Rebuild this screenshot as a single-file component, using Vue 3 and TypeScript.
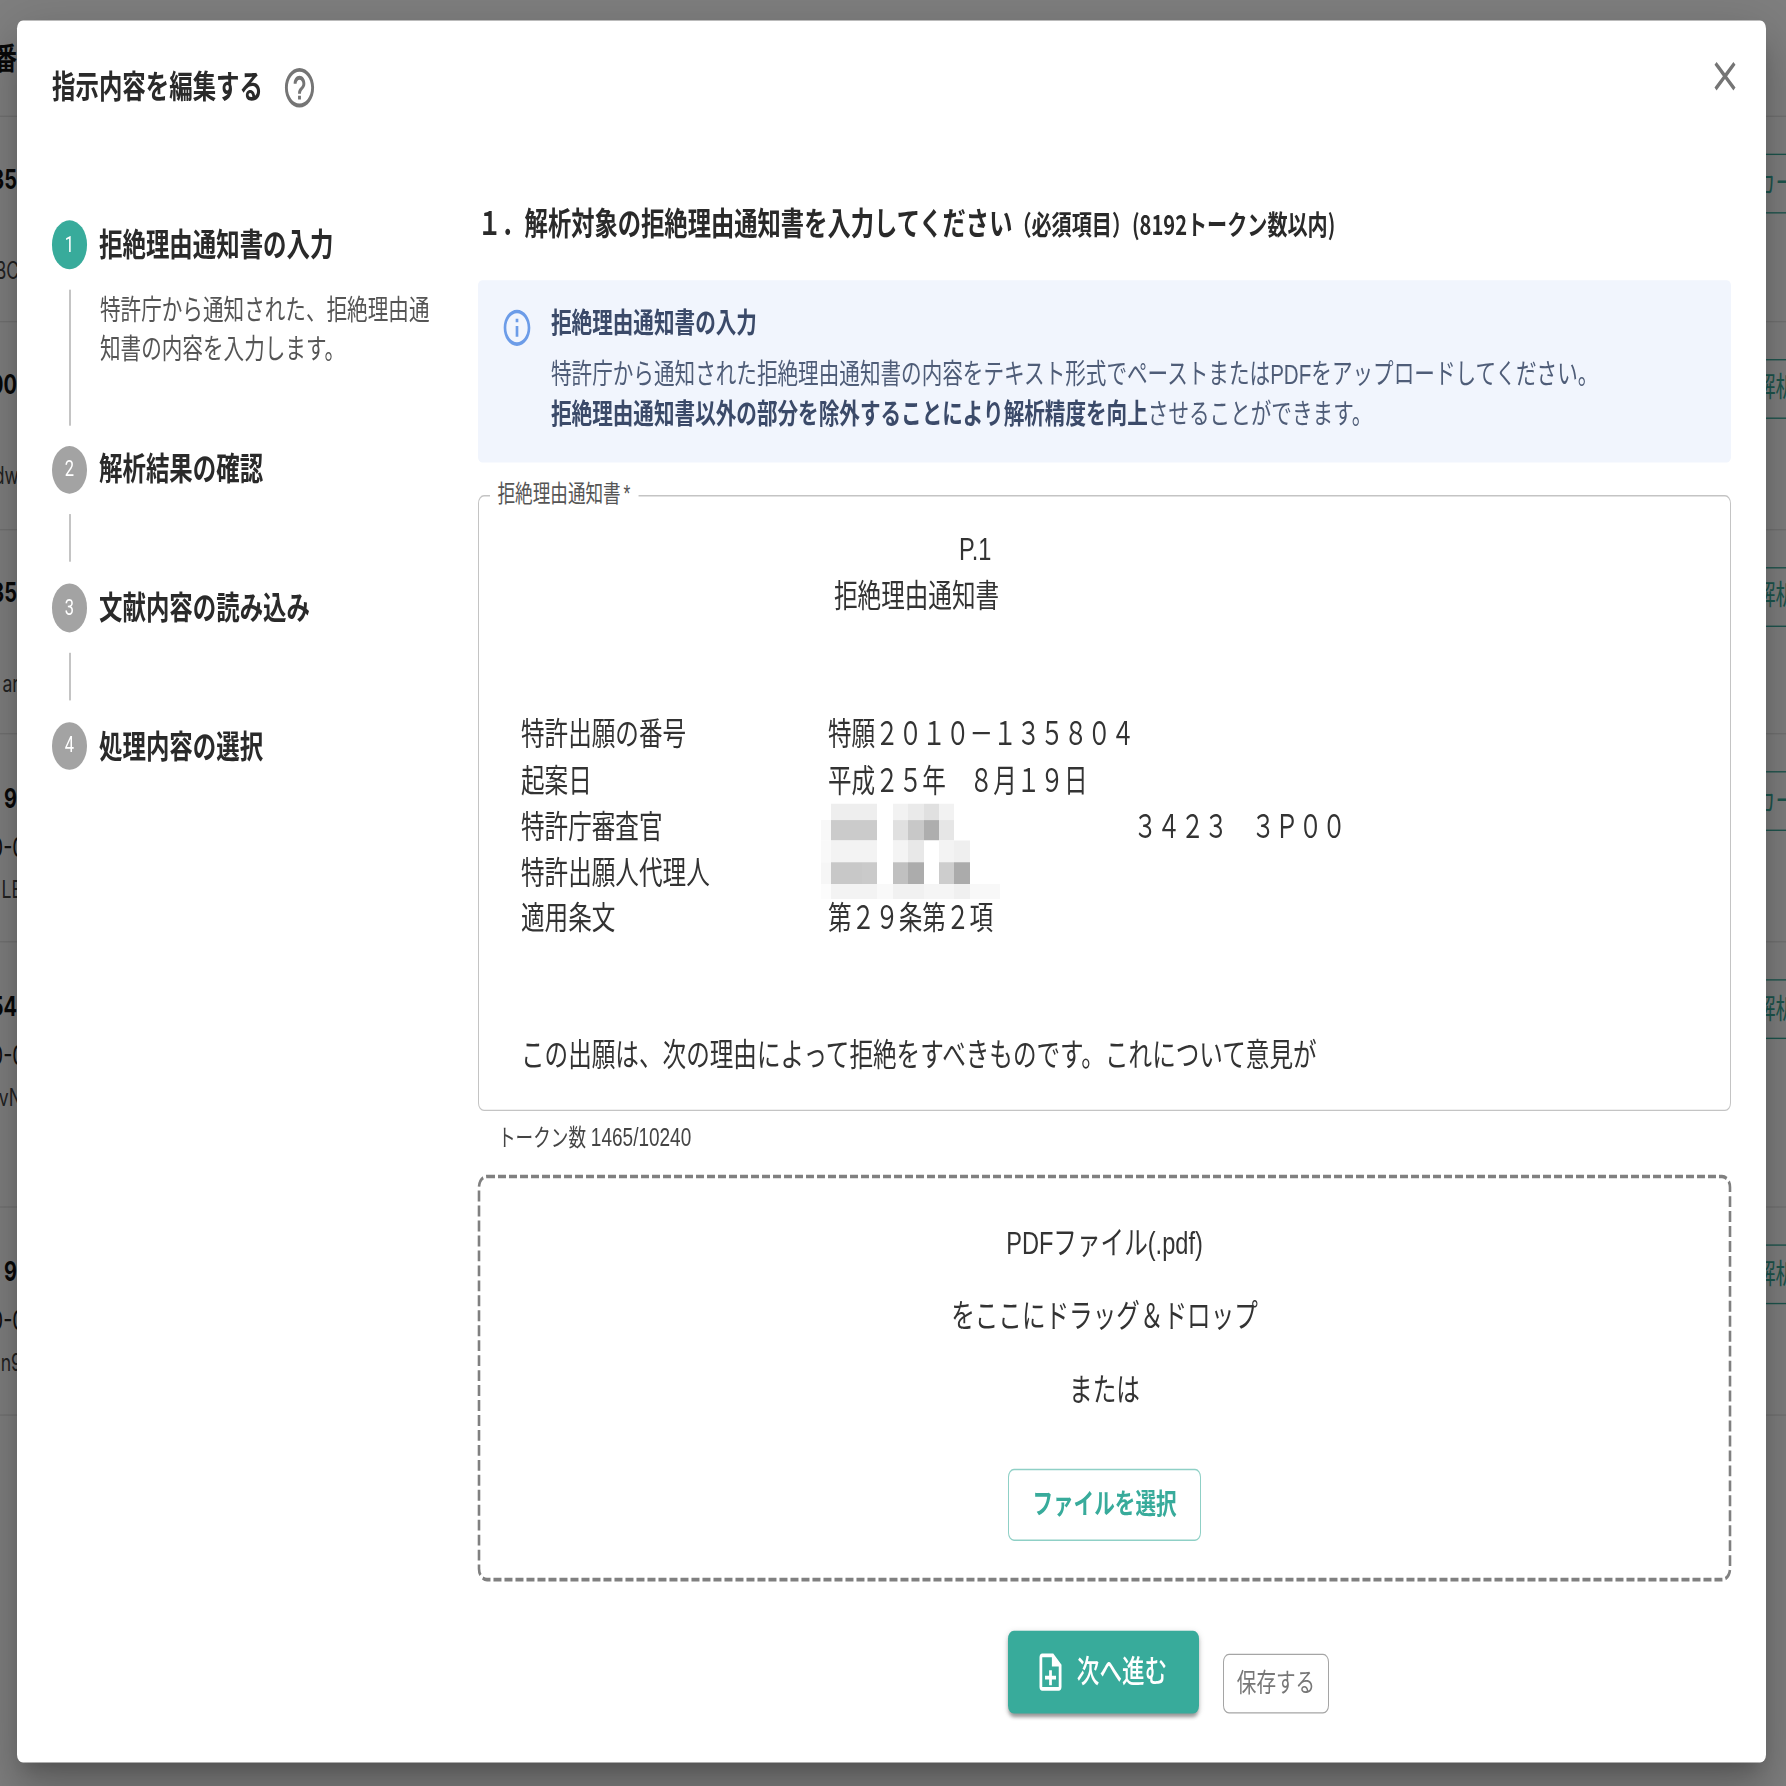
<script setup lang="ts">
interface Row { h: number; kind: string; left: string[]; right: string }
const rows: Row[] = [
  { h: 86, kind: 'head', left: ['番'], right: '' },
  { h: 150.7, kind: 'two', left: ['35', 'BC'], right: 'カー' },
  { h: 153, kind: 'two', left: ['00', 'dw'], right: '解析' },
  { h: 150.7, kind: 'two', left: ['35', 'ar'], right: '解析' },
  { h: 153, kind: 'three', left: ['9', '10-0', 'LE'], right: 'カー' },
  { h: 195, kind: 'three', left: ['54', '10-0', 'xvN'], right: '解析' },
  { h: 153, kind: 'three', left: ['9', '10-0', 'n9'], right: '解析' },
]
const steps = [
  { n: 1, title: '拒絶理由通知書の入力', active: true, desc: '特許庁から通知された、拒絶理由通知書の内容を入力します。' },
  { n: 2, title: '解析結果の確認', active: false, desc: '' },
  { n: 3, title: '文献内容の読み込み', active: false, desc: '' },
  { n: 4, title: '処理内容の選択', active: false, desc: '' },
]
const docRows = [
  { label: '特許出願の番号', value: '特願２０１０－１３５８０４', extra: '' },
  { label: '起案日', value: '平成２５年　８月１９日', extra: '' },
  { label: '特許庁審査官', value: '', extra: '３４２３　３Ｐ００' },
  { label: '特許出願人代理人', value: '', extra: '' },
  { label: '適用条文', value: '第２９条第２項', extra: '' },
]
const w = '#ffffff'
const mosaic: string[][] = [
  [w, '#eeeeee', '#eeeeee', '#eeeeee', w, '#f2f2f2', '#eaeaea', '#e0e0e0', '#f2f2f2', w, w, w],
  ['#f8f8f8', '#cbcbcb', '#cbcbcb', '#cbcbcb', w, '#e0e0e0', '#c8c8c8', '#aeaeae', '#e6e6e6', w, w, w],
  ['#f9f9f9', '#f3f3f3', '#f3f3f3', '#f3f3f3', w, '#f4f4f4', '#e8e8e8', w, '#f3f3f3', '#efefef', w, w],
  ['#f6f6f6', '#c8c8c8', '#c8c8c8', '#cacaca', w, '#c0c0c0', '#acacac', w, '#cdcdcd', '#ababab', w, w],
  ['#fcfcfc', '#f3f3f3', '#f3f3f3', '#f3f3f3', '#f9f9f9', '#f1f1f1', '#f1f1f1', '#f5f5f5', '#f5f5f5', '#f0f0f0', '#f8f8f8', '#f8f8f8'],
]
</script>

<template>
  <div class="stage">
    <div class="page">
      <div class="table">
        <div v-for="(r, i) in rows" :key="i" class="row" :class="r.kind" :style="{ height: r.h + 'px' }">
          <div class="left-cell">
            <div v-for="(t, j) in r.left" :key="j" class="left-line" :class="'l' + j">{{ t }}</div>
          </div>
          <div class="right-cell">
            <div v-if="r.right" class="row-btn"><span>{{ r.right }}</span></div>
          </div>
        </div>
      </div>
      <div class="scrim"></div>

      <section class="modal">
        <header class="modal-head">
          <h2 class="modal-title">指示内容を編集する</h2>
          <svg class="help" viewBox="0 0 24 24"><path d="M11 18h2v-2h-2v2zm1-16C6.48 2 2 6.48 2 12s4.48 10 10 10 10-4.48 10-10S17.52 2 12 2zm0 18c-4.41 0-8-3.59-8-8s3.59-8 8-8 8 3.59 8 8-3.59 8-8 8zm0-14c-2.21 0-4 1.79-4 4h2c0-1.1.9-2 2-2s2 .9 2 2c0 2-3 1.75-3 5h2c0-2.25 3-2.5 3-5 0-2.21-1.79-4-4-4z" /></svg>
        </header>
        <svg class="close" viewBox="0 0 24 24"><path d="M19 6.41 17.59 5 12 10.59 6.41 5 5 6.41 10.59 12 5 17.59 6.41 19 12 13.41 17.59 19 19 17.59 13.41 12z" /></svg>

        <div class="modal-body">
          <nav class="stepper">
            <template v-for="(s, i) in steps" :key="s.n">
              <div class="step-head">
                <span class="step-num" :class="{ active: s.active }">{{ s.n }}</span>
                <span class="step-title">{{ s.title }}</span>
              </div>
              <div v-if="i < steps.length - 1" class="connector" :class="{ open: s.active }">
                <p v-if="s.desc" class="step-desc">{{ s.desc }}</p>
              </div>
            </template>
          </nav>

          <main class="content">
            <div class="heading">１．解析対象の拒絶理由通知書を入力してください<small>（必須項目）(8192トークン数以内)</small></div>

            <div class="alert">
              <svg class="info" viewBox="0 0 24 24"><path d="M11 7h2v2h-2zm0 4h2v6h-2zm1-9C6.48 2 2 6.48 2 12s4.48 10 10 10 10-4.48 10-10S17.52 2 12 2zm0 18c-4.41 0-8-3.59-8-8s3.59-8 8-8 8 3.59 8 8-3.59 8-8 8z" /></svg>
              <div class="alert-text">
                <div class="alert-title">拒絶理由通知書の入力</div>
                <div class="alert-line">特許庁から通知された拒絶理由通知書の内容をテキスト形式でペーストまたはPDFをアップロードしてください。</div>
                <div class="alert-line"><strong>拒絶理由通知書以外の部分を除外することにより解析精度を向上</strong>させることができます。</div>
              </div>
            </div>

            <div class="field">
              <span class="field-label">拒絶理由通知書 *</span>
              <div class="doc">
                <div class="doc-page">P.1</div>
                <div class="doc-title">拒絶理由通知書</div>
                <div class="doc-gap first"></div>
                <div v-for="d in docRows" :key="d.label" class="doc-row">
                  <span class="doc-label">{{ d.label }}</span>
                  <span class="doc-value">{{ d.value }}</span>
                  <span class="doc-extra">{{ d.extra }}</span>
                </div>
                <div class="doc-gap"></div>
                <div class="doc-line">この出願は、次の理由によって拒絶をすべきものです。これについて意見が</div>
                <div class="mosaic">
                  <template v-for="(cells, y) in mosaic" :key="y">
                    <i v-for="(c, x) in cells" :key="x" :style="{ background: c }"></i>
                  </template>
                </div>
              </div>
            </div>
            <div class="counter">トークン数 <span>1465/10240</span></div>

            <div class="drop">
              <svg class="drop-border" width="1253" height="296.5" viewBox="0 0 1253 296.5">
                <rect x="1" y="0" width="1251" height="296.5" rx="8" ry="8" />
              </svg>
              <div class="drop-line">PDFファイル(.pdf)</div>
              <div class="drop-line">をここにドラッグ＆ドロップ</div>
              <div class="drop-line">または</div>
              <button class="pick" type="button">ファイルを選択</button>
            </div>

            <div class="actions">
              <button class="next" type="button">
                <svg viewBox="0 0 24 24"><path d="M13 11h-2v3H8v2h3v3h2v-3h3v-2h-3zm1-9H6c-1.1 0-2 .9-2 2v16c0 1.1.89 2 1.99 2H18c1.1 0 2-.9 2-2V8l-6-6zm4 18H6V4h7v5h5v11z" /></svg>
                <span>次へ進む</span>
              </button>
              <button class="save" type="button">保存する</button>
            </div>
          </main>
        </div>
      </section>
    </div>
  </div>
</template>

<style>
html, body { margin: 0; background: #fff; }
</style>

<style scoped>
.stage { width: 1786px; height: 1786px; overflow: hidden; }
.page {
  position: relative;
  width: 1786px;
  height: 1313.2px;
  transform: scaleY(1.36);
  transform-origin: top left;
  font-family: "Liberation Sans", "Noto Sans CJK JP", sans-serif;
  color: #222;
  background: #fff;
}
.table { width: 1786px; }
.row {
  display: flex;
  justify-content: space-between;
  box-sizing: border-box;
  border-bottom: 1px solid #e4e4e4;
}
.left-cell { width: 17px; overflow: hidden; }
.left-line {
  display: flex;
  justify-content: flex-end;
  white-space: nowrap;
  font: 400 17.6px/30px Inter, "Noto Sans CJK JP", sans-serif;
  color: #444;
}
.left-line.l0 { font-size: 20px; font-weight: 700; color: #111; }
.two .l0 { margin-top: 31px; }
.two .l1 { margin-top: 37px; margin-right: -2px; }
.three .l0 { margin-top: 32px; }
.three .l1 { margin-top: 6px; margin-right: -8px; color: #222; font-size: 20px; }
.three .l2 { margin-top: 1px; margin-right: -5px; }
.head .l0 { margin-top: 28px; font-size: 22px; }
.right-cell { width: 20px; overflow: hidden; }
.row-btn {
  box-sizing: border-box;
  margin-top: 27px;
  height: 44px;
  padding-top: 2.5px;
  border-top: 1px solid #38ab9b;
  border-bottom: 1px solid #38ab9b;
  white-space: nowrap;
  font-size: 20.6px;
  line-height: 36px;
  color: #38ab9b;
}
.row-btn span { display: block; margin-left: -11px; }
.scrim { position: absolute; inset: 0; background: rgba(0, 0, 0, 0.5); }

.modal {
  position: absolute;
  left: 17px;
  top: 14.7px;
  width: 1749px;
  height: 1281px;
  box-sizing: border-box;
  padding: 30px 35px 0;
  background: #fff;
  border-radius: 6px;
  box-shadow: 0 11px 15px -7px rgba(0, 0, 0, 0.2), 0 24px 38px 3px rgba(0, 0, 0, 0.14), 0 9px 46px 8px rgba(0, 0, 0, 0.12);
}
.modal-head { display: flex; align-items: center; gap: 19px; height: 39px; margin-bottom: 64.3px; }
.modal-title { margin: 0; font-size: 23.45px; line-height: 34px; font-weight: 700; color: #2a2a2a; }
.help { width: 35px; height: 35px; fill: #757575; }
.close { position: absolute; top: 23px; right: 23px; width: 36px; height: 36px; fill: #757575; }

.modal-body { display: grid; grid-template-columns: 426px 1253px; }
.stepper { padding-top: 14.5px; }
.step-head { display: flex; align-items: center; gap: 12px; height: 35.3px; }
.step-num {
  flex: none;
  display: flex;
  align-items: center;
  justify-content: center;
  width: 35px;
  height: 35.3px;
  border-radius: 50%;
  background: #a3a3a3;
  color: #fff;
  font: 400 16.5px/1 Roboto, sans-serif;
}
.step-num.active { background: #38ab9b; }
.step-title { font-size: 23.45px; font-weight: 700; color: #2a2a2a; line-height: 32px; }
.connector {
  display: flow-root;
  margin: 15.4px 0 16px 17px;
  height: 35px;
  border-left: 2px solid #c4c4c4;
}
.connector.open { margin-bottom: 15px; height: 99.5px; }
.step-desc {
  margin: -0.5px 0 0;
  padding-left: 29px;
  width: 335px;
  font-size: 20.6px;
  line-height: 29.6px;
  color: #555;
}

.heading {
  height: 32px;
  padding-top: 1px;
  line-height: 32px;
  margin-bottom: 25px;
  font-size: 23.3px;
  font-weight: 700;
  color: #2a2a2a;
  white-space: nowrap;
}
.heading small { font-size: 20.1px; margin-left: -1px; font-family: "Noto Sans CJK JP", sans-serif; }

.alert {
  display: flex;
  box-sizing: border-box;
  height: 134px;
  padding: 17.5px 20px 0 23px;
  gap: 18px;
  background: #f1f5fd;
  border-radius: 4px;
}
.info { flex: none; width: 32px; height: 32px; margin-top: 1.5px; fill: #6c9ce8; }
.alert-text { line-height: 29.6px; font-size: 20.6px; color: #4f5d78; white-space: nowrap; }
.alert-title { font-weight: 700; color: #3b4a69; margin-bottom: 7.2px; }
.alert-line strong { font-weight: 700; color: #3b4a69; }

.field {
  position: relative;
  box-sizing: border-box;
  height: 453px;
  margin-top: 24px;
  border: 1.5px solid #c4c4c4;
  border-radius: 6px;
}
.field-label {
  position: absolute;
  left: 10.5px;
  top: -14px;
  padding: 0 8px;
  background: #fff;
  font-size: 17.6px;
  line-height: 24px;
  word-spacing: -2px;
  color: #555;
}
.doc {
  position: relative;
  padding: 23px 0 0 42px;
  font-size: 23.6px;
  line-height: 33.7px;
  color: #333;
  white-space: nowrap;
}
.doc-page { padding-left: 438px; }
.doc-title { padding-left: 313px; }
.doc-gap { height: 67.5px; }
.doc-gap.first { height: 69px; }
.doc-row { display: flex; }
.doc-label { flex: none; width: 307px; }
.doc-value { flex: none; width: 305.5px; }
.doc-extra { flex: none; }
.mosaic {
  position: absolute;
  left: 341.5px;
  top: 226px;
  display: grid;
  grid-template-columns: 10.7px repeat(11, 15.4px);
  grid-template-rows: 11.8px 15.5px 15.5px 15.9px 11px;
}

.counter {
  height: 24px;
  margin-top: 8px;
  margin-bottom: -1px;
  padding-left: 20px;
  font-size: 17.6px;
  line-height: 24px;
  color: #444;
}
.counter span { font-size: 19px; }
.drop {
  position: relative;
  display: flex;
  flex-direction: column;
  align-items: center;
  box-sizing: border-box;
  height: 296.5px;
  margin-top: 16.7px;
  padding-top: 33.8px;
}
.drop-border { position: absolute; left: 0; top: 0; overflow: visible; }
.drop-border rect { fill: none; stroke: #808080; stroke-width: 2.6; stroke-dasharray: 8 3; }
.drop-line { font-size: 23.6px; line-height: 33px; color: #333; margin-bottom: 21px; }
.pick {
  box-sizing: border-box;
  width: 193px;
  height: 53px;
  margin-top: 19.6px;
  padding: 0;
  background: #fff;
  border: 1.5px solid #8fd0c6;
  border-radius: 6px;
  font: 700 20.6px/1 "Liberation Sans", "Noto Sans CJK JP", sans-serif;
  color: #38ab9b;
}
.actions { display: flex; align-items: flex-end; gap: 24px; margin: 37.5px 0 0 530px; }
.next {
  display: flex;
  align-items: center;
  justify-content: center;
  gap: 10px;
  box-sizing: border-box;
  width: 191px;
  height: 61.8px;
  padding: 0 6px 0 0;
  border: 0;
  border-radius: 6px;
  background: #38ab9b;
  color: #fff;
  font: 500 22.6px/1 "Liberation Sans", "Noto Sans CJK JP", sans-serif;
  box-shadow: 0 3px 3px -1px rgba(0, 0, 0, 0.25), 0 2px 4px rgba(0, 0, 0, 0.14), 0 1px 6px rgba(0, 0, 0, 0.12);
}
.next svg { width: 33px; height: 33px; fill: #fff; margin-top: -1px; }
.next span { padding-top: 1px; }
.save {
  box-sizing: border-box;
  width: 106px;
  height: 44px;
  padding: 0 0 1.5px;
  background: #fff;
  border: 1.5px solid #a5a5a5;
  border-radius: 6px;
  font: 400 19.6px/1 "Liberation Sans", "Noto Sans CJK JP", sans-serif;
  color: #777;
}
</style>
